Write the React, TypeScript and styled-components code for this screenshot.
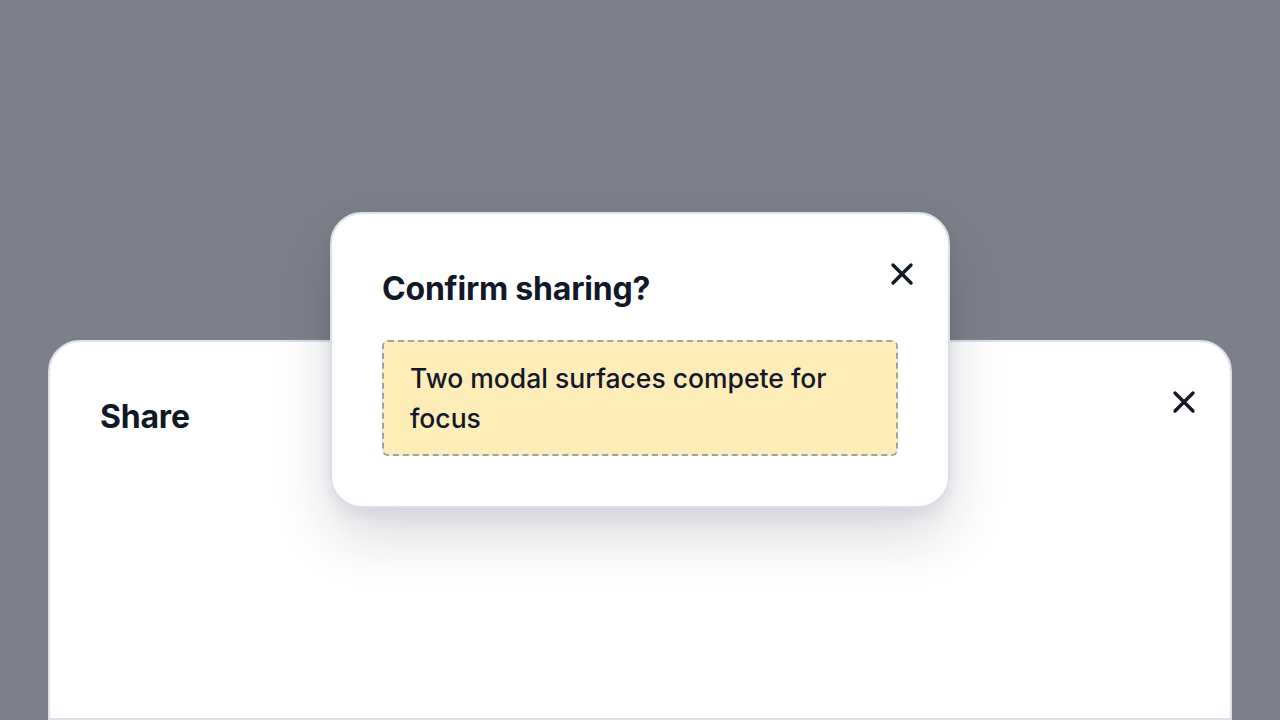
import React from 'react';
import styled, { createGlobalStyle } from 'styled-components';

const GlobalStyle = createGlobalStyle`
    * {
        box-sizing: border-box;
    }
    html, body {
        margin: 0;
        padding: 0;
        width: 100%;
        height: 100%;
        overflow: hidden;
    }
    body {
        background: #7c808a;
        font-family: Inter, "Noto Sans", sans-serif;
        color: #111827;
    }
`

const Overlay = styled.main`
    position: relative;
    width: 1280px;
    height: 720px;
    padding: 340px 48px 0;
    display: flex;
    flex-direction: column;
`
const Sheet = styled.section<{ $top?: boolean }>`
    position: ${p => (p.$top ? 'absolute' : 'relative')};
    ${p => p.$top && `
        top: 212px;
        left: 330px;
        width: 620px;
        box-shadow: 0 28px 56px rgba(15, 23, 42, 0.16), 0 6px 16px rgba(15, 23, 42, 0.06);
    `}
    flex: ${p => (p.$top ? 'none' : '1')};
    background: #ffffff;
    border: 2px solid #dcdfe8;
    border-radius: ${p => (p.$top ? '32px' : '32px 32px 0 0')};
    padding: 56px 50px 50px;
    display: flex;
    flex-direction: column;
    gap: 32px;
`
const Title = styled.h2`
    margin: 0;
    font-size: 32px;
    line-height: 38px;
    font-weight: 700;
    letter-spacing: -0.2px;
    color: #111827;
`
const Close = styled.button`
    position: absolute;
    top: 38px;
    right: 24px;
    width: 44px;
    height: 44px;
    padding: 0;
    border: none;
    background: transparent;
    display: flex;
    align-items: center;
    justify-content: center;
    color: #111827;
    cursor: pointer;
`
const Note = styled.div`
    background: #ffedb9;
    border: 2px dashed #9ca1ae;
    border-radius: 6px;
    padding: 16px 26px;
    font-size: 26.5px;
    line-height: 40px;
    font-weight: 500;
    color: #111827;
`

function CloseIcon() {
    return (
        <svg width="24" height="24" viewBox="0 0 24 24" fill="none">
            <path d="M3 3L21 21M21 3L3 21" stroke="currentColor" strokeWidth="3.4" strokeLinecap="round" />
        </svg>
    );
}

export default function App() {
    return (
        <>
            <GlobalStyle />
            <Overlay>
                <Sheet>
                    <Title>Share</Title>
                    <Close aria-label="Close"><CloseIcon /></Close>
                </Sheet>
                <Sheet $top>
                    <Title>Confirm sharing?</Title>
                    <Close aria-label="Close"><CloseIcon /></Close>
                    <Note>Two modal surfaces compete for focus</Note>
                </Sheet>
            </Overlay>
        </>
    );
}
